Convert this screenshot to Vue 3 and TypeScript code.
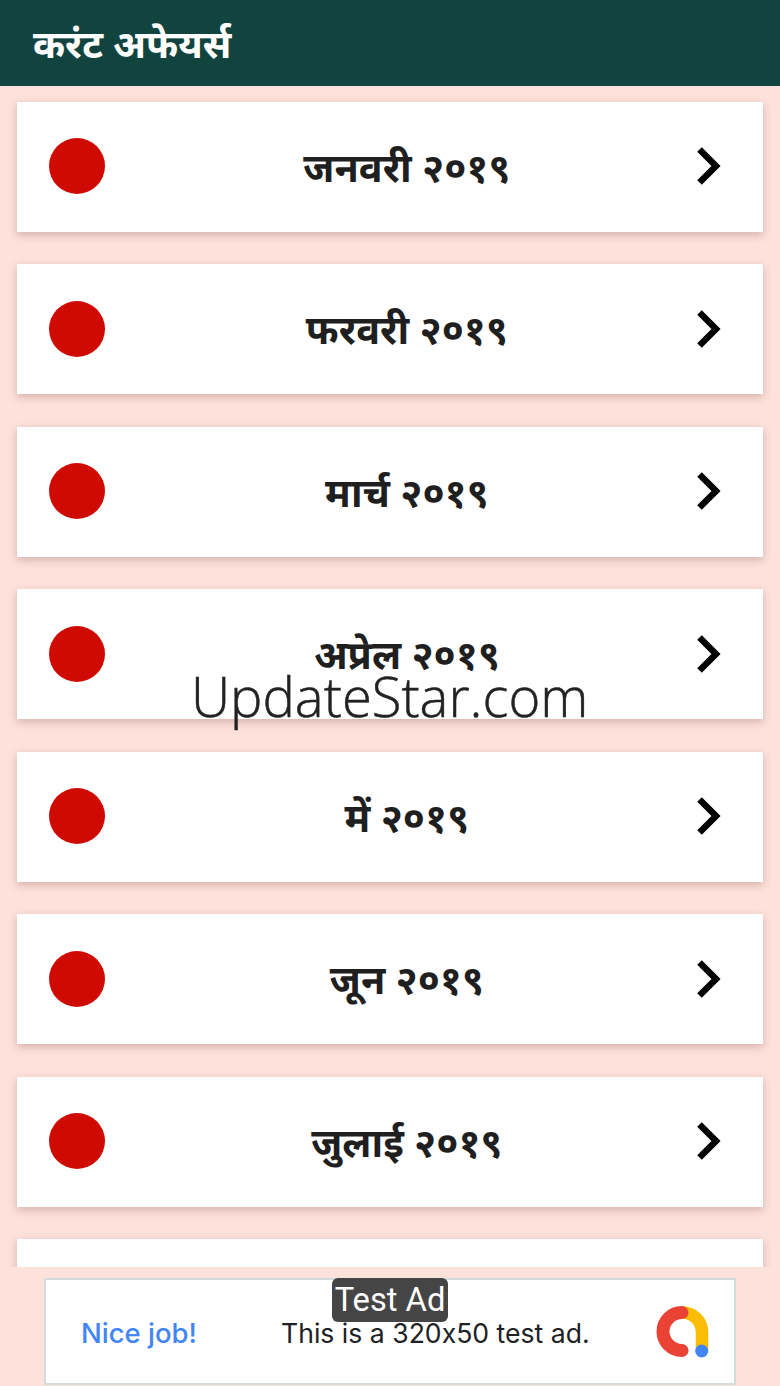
<script setup lang="ts">
const months: string[] = [
  'जनवरी २०१९',
  'फरवरी २०१९',
  'मार्च २०१९',
  'अप्रेल २०१९',
  'में २०१९',
  'जून २०१९',
  'जुलाई २०१९',
  '',
]
</script>

<template>
  <div class="screen">
    <header class="bar">करंट अफेयर्स</header>
    <main class="list">
      <div v-for="(m, i) in months" :key="i" class="card">
        <span class="dot"></span>
        <span class="label">{{ m }}</span>
        <svg class="chev" viewBox="0 0 30 40" width="30" height="40">
          <path d="M7.500 3.500 L24 20 L7.500 36.500" fill="none" stroke="#000" stroke-width="6.500" />
        </svg>
      </div>
    </main>
    <footer class="adbar">
      <div class="ad">
        <span class="nice">Nice job!</span>
        <span class="adtext">This is a 320x50 test ad.</span>
        <svg class="adlogo" viewBox="0 0 54 54" width="54" height="54">
          <path d="M46 46 V27 A19.500 19.500 0 0 0 26.500 7.500" fill="none" stroke="#fbbc04" stroke-width="12.500" />
          <path d="M26 7.500 A19 19 0 0 0 26 45.500" fill="none" stroke="#ea4335" stroke-width="13" stroke-linecap="round" />
          <circle cx="45.700" cy="46" r="6.500" fill="#4285f4" />
        </svg>
        <span class="badge">Test Ad</span>
      </div>
    </footer>
    <div class="watermark">UpdateStar.com</div>
  </div>
</template>

<style>
html, body { margin: 0; padding: 0; }
</style>

<style scoped>
.screen {
  position: relative;
  width: 780px;
  height: 1386px;
  overflow: hidden;
  background: #fde1db;
  display: flex;
  flex-direction: column;
  font-family: "Noto Sans", "Noto Sans Devanagari", "Lohit Devanagari", "Liberation Sans", sans-serif;
}
.bar {
  height: 86px;
  flex: none;
  box-sizing: border-box;
  padding-left: 33px;
  display: flex;
  align-items: center;
  background: #12443f;
  color: #fff;
  font-size: 38.700px;
  font-weight: 700;
}
.list {
  flex: 1;
  min-height: 0;
  overflow: hidden;
  padding: 15.500px 17px 0;
  display: flex;
  flex-direction: column;
  gap: 32.500px;
}
.card {
  flex: none;
  height: 130px;
  background: #fff;
  box-shadow: 0 3px 8px rgba(120, 70, 60, 0.3);
  display: flex;
  align-items: center;
  padding: 0 41px 0 32px;
  color: #1f1f1f;
}
.dot {
  width: 56px;
  height: 56px;
  margin-top: -1px;
  border-radius: 50%;
  background: #cf0a00;
  flex: none;
}
.label {
  flex: 1;
  text-align: center;
  font-size: 39.600px;
  font-weight: 700;
  padding-left: 17px;
}
.chev { flex: none; margin-top: -1px; }
.adbar {
  flex: none;
  height: 119px;
  background: #fde1db;
  position: relative;
  padding: 11px 44px 0;
  box-sizing: border-box;
}
.ad {
  position: relative;
  box-sizing: border-box;
  height: 107px;
  padding-top: 2px;
  background: #fff;
  border: 2px solid #d3dcdc;
  display: flex;
  align-items: center;
  font-family: Roboto, sans-serif;
}
.nice {
  margin-left: 35px;
  width: 200px;
  color: #4285f4;
  font-size: 27.500px;
  font-weight: 500;
  font-family: Inter, Roboto, sans-serif;
}
.adtext {
  font-family: Inter, Roboto, sans-serif;
  font-feature-settings: "calt" 0;
  font-size: 26.600px;
  color: #202124;
  white-space: nowrap;
}
.adlogo { position: absolute; right: 24px; top: 25px; }
.badge {
  position: absolute;
  left: 286px;
  top: -2px;
  width: 116px;
  height: 44px;
  box-sizing: border-box;
  background: #454545;
  border-radius: 6px;
  color: #fff;
  font-size: 32.700px;
  line-height: 44px;
  text-align: center;
}
.watermark {
  position: absolute;
  left: 191px;
  top: 661px;
  font-family: "Open Sans", sans-serif;
  font-weight: 300;
  font-size: 54.400px;
  line-height: 70px;
  color: #222;
  -webkit-text-stroke: 0.5px #222;
}
</style>
